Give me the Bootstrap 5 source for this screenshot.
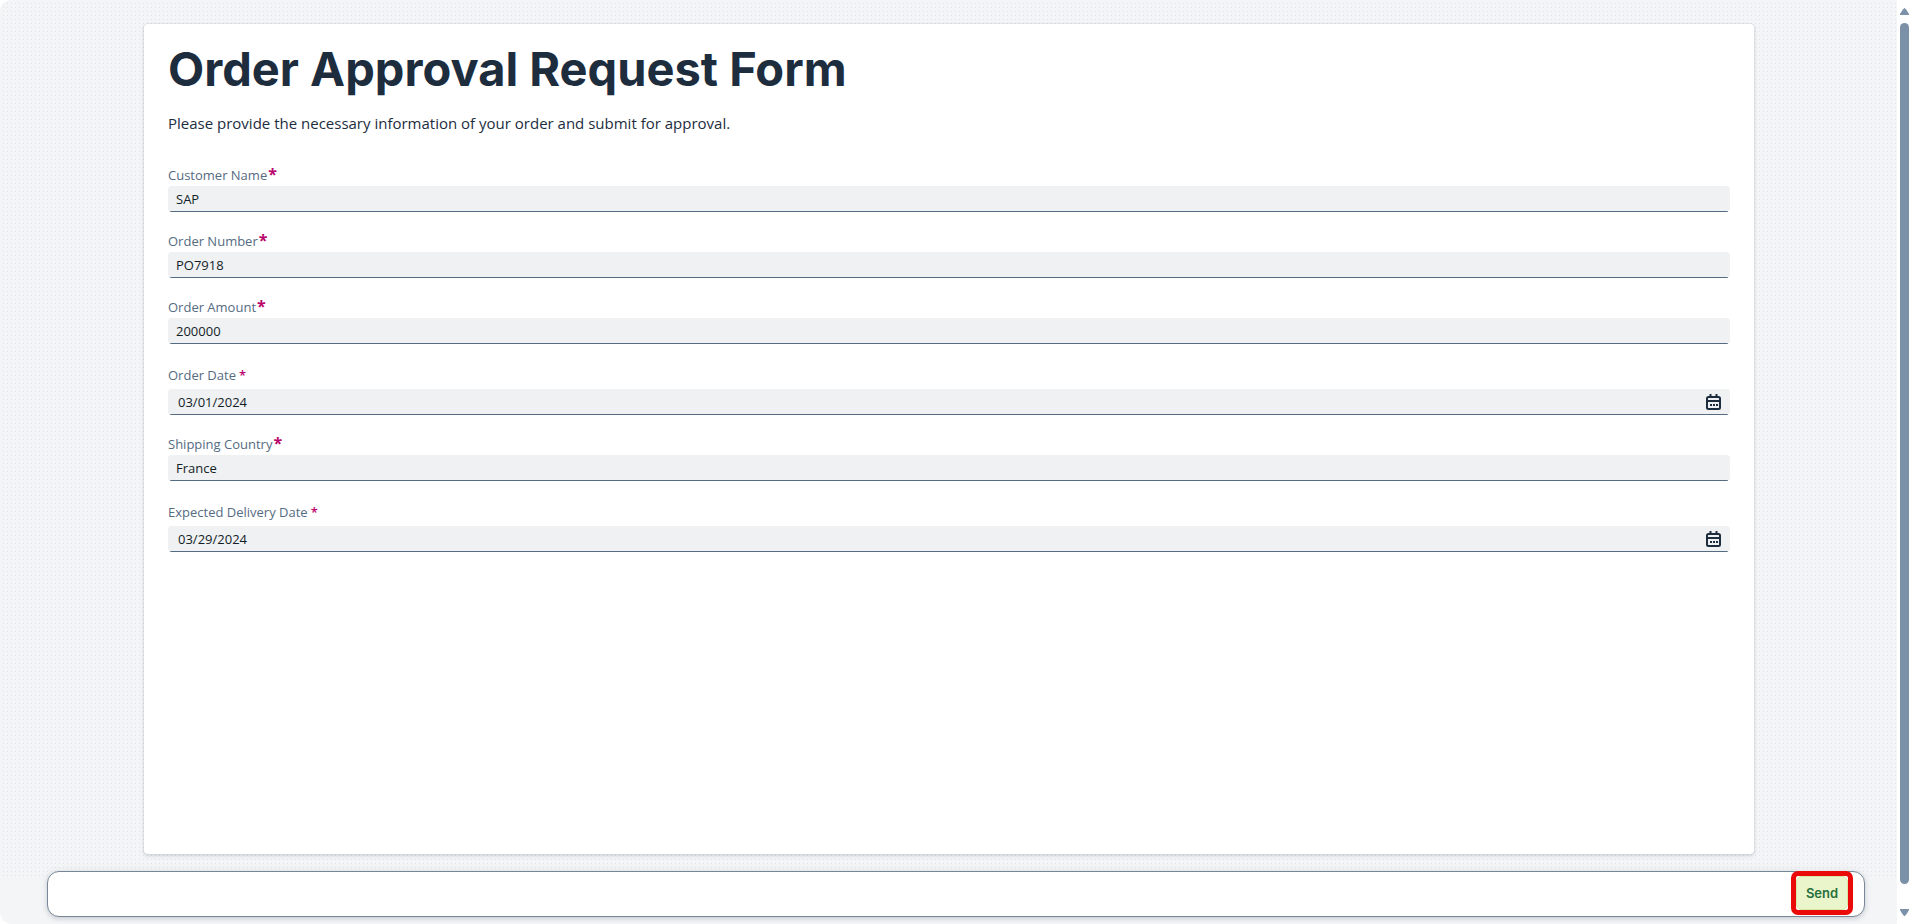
<!DOCTYPE html>
<html lang="en">
<head>
<meta charset="utf-8">
<meta name="viewport" content="width=device-width, initial-scale=1">
<title>Order Approval Request Form</title>
<link href="https://cdn.jsdelivr.net/npm/bootstrap@5.3.0/dist/css/bootstrap.min.css" rel="stylesheet">
<style>
  body { font-family: "Open Sans", "Noto Sans", sans-serif; font-size: 13px; line-height: 20px; color: #1d2d3e; background: #fff; }
  .app-shell { background: #f4f5f7; border-radius: 12px 0 0 12px; }
  .canvas-area { padding: 24px 143px 22px 144px; background-image: linear-gradient(#f4f5f7 3px, transparent 3px), linear-gradient(90deg, #f4f5f7 3px, #dfe2e6 3px); background-size: 4px 4px; border-top-left-radius: 12px; }
  .form-sheet { border-radius: 4px; padding: 17px 24px 24px; box-shadow: 0 0 2px rgba(34,53,72,.2), 0 2px 4px rgba(34,53,72,.15); }
  .form-title { font-size: 47px; line-height: 56px; font-weight: 700; margin-bottom: 16px; font-family: Inter, sans-serif; }
  .form-intro { font-size: 15px; line-height: 20px; margin-bottom: 32px; }
  .form-field { margin-bottom: 19px; }
  .form-field label { display: block; color: #556b82; height: 21px; }
  .form-field.date-field label { height: 26px; padding-top: 2px; }
  .req { color: #ba066c; font-weight: 700; font-size: 16px; line-height: 16px; margin-left: 1px; }
  .date-field .req { font-size: 13px; font-weight: 600; margin-left: 3px; }
  .sap-input { width: 100%; height: 26px; border: 0; border-radius: 4px; padding: 0 8px; color: #131e29; background: linear-gradient(#556b82, #556b82) center bottom / calc(100% - 4px) 1px no-repeat #eff1f2; }
  .date-field .sap-input { padding: 0 40px 0 10px; }
  .cal-btn { top: 5px; right: 8px; width: 16px; height: 16px; padding: 0; border: 0; background: none; display: flex; }
  .footer-zone { margin-top: -5px; padding: 0 32px 7px 47px; }
  .footer-bar { height: 46px; border: 1px solid #788796; border-radius: 12px; box-shadow: 0 2px 4px rgba(34,53,72,.15), 0 0 8px rgba(34,53,72,.08); padding-right: 11px; }
  .send-frame { margin-top: -1px; border: 5px solid #ea0a0a; border-radius: 7px; background: #fff; }
  .send-btn { width: 52px; height: 34px; padding: 0; border: 1px solid #d8e6a4; border-radius: 6px; background: #ebf5cb; color: #256f3a; font-weight: 600; font-family: Inter, sans-serif; font-size: 13px; }
  .scroll-rail { width: 15px; padding: 8px 3px; }
  .scroll-thumb { width: 9px; border-radius: 5px; background: #7b91a8; margin: 8px 0 25px; }
</style>
</head>
<body>
<div class="d-flex min-vh-100">
  <div class="app-shell flex-grow-1 d-flex flex-column">
    <main class="canvas-area flex-grow-1 d-flex flex-column">
      <form id="orderForm" class="form-sheet bg-white flex-grow-1">
        <h1 class="form-title">Order Approval Request Form</h1>
        <p class="form-intro">Please provide the necessary information of your order and submit for approval.</p>
        <div class="form-field"><label for="customer">Customer Name<span class="req">*</span></label><input class="sap-input d-block" id="customer" type="text" value="SAP"></div>
        <div class="form-field"><label for="number">Order Number<span class="req">*</span></label><input class="sap-input d-block" id="number" type="text" value="PO7918"></div>
        <div class="form-field"><label for="amount">Order Amount<span class="req">*</span></label><input class="sap-input d-block" id="amount" type="text" value="200000"></div>
        <div class="form-field date-field"><label for="orderDate">Order Date<span class="req">*</span></label>
          <div class="position-relative"><input class="sap-input d-block" id="orderDate" type="text" value="03/01/2024">
            <button type="button" class="cal-btn position-absolute" aria-label="Open calendar"><svg width="16" height="16" viewBox="0 0 16 16" fill="none" stroke="#1d2d3e" stroke-width="2"><rect x="1" y="3" width="13" height="12" rx="1.500"/><path d="M1 7h13"/><path d="M4.500 0v4M10.500 0v4"/><path d="M4 11h2M7 11h2M10 11h2"/></svg></button></div></div>
        <div class="form-field"><label for="country">Shipping Country<span class="req">*</span></label><input class="sap-input d-block" id="country" type="text" value="France"></div>
        <div class="form-field date-field"><label for="deliveryDate">Expected Delivery Date<span class="req">*</span></label>
          <div class="position-relative"><input class="sap-input d-block" id="deliveryDate" type="text" value="03/29/2024">
            <button type="button" class="cal-btn position-absolute" aria-label="Open calendar"><svg width="16" height="16" viewBox="0 0 16 16" fill="none" stroke="#1d2d3e" stroke-width="2"><rect x="1" y="3" width="13" height="12" rx="1.500"/><path d="M1 7h13"/><path d="M4.500 0v4M10.500 0v4"/><path d="M4 11h2M7 11h2M10 11h2"/></svg></button></div></div>
      </form>
    </main>
    <footer class="footer-zone">
      <div class="footer-bar bg-white d-flex justify-content-end align-items-start">
        <div class="send-frame"><button type="submit" form="orderForm" class="send-btn d-block">Send</button></div>
      </div>
    </footer>
  </div>
  <div class="scroll-rail d-flex flex-column align-items-center" aria-hidden="true">
    <svg width="9" height="7" viewBox="0 0 9 7"><path d="M4.500 0Q5.500 0 9 6V7H0V6Q3.500 0 4.500 0Z" fill="#7b91a8"/></svg>
    <div class="scroll-thumb flex-grow-1"></div>
    <svg width="9" height="7" viewBox="0 0 9 7"><path d="M4.500 7Q5.500 7 9 1V0H0V1Q3.500 7 4.500 7Z" fill="#7b91a8"/></svg>
  </div>
</div>
<script src="https://cdn.jsdelivr.net/npm/bootstrap@5.3.0/dist/js/bootstrap.bundle.min.js"></script>
</body>
</html>
